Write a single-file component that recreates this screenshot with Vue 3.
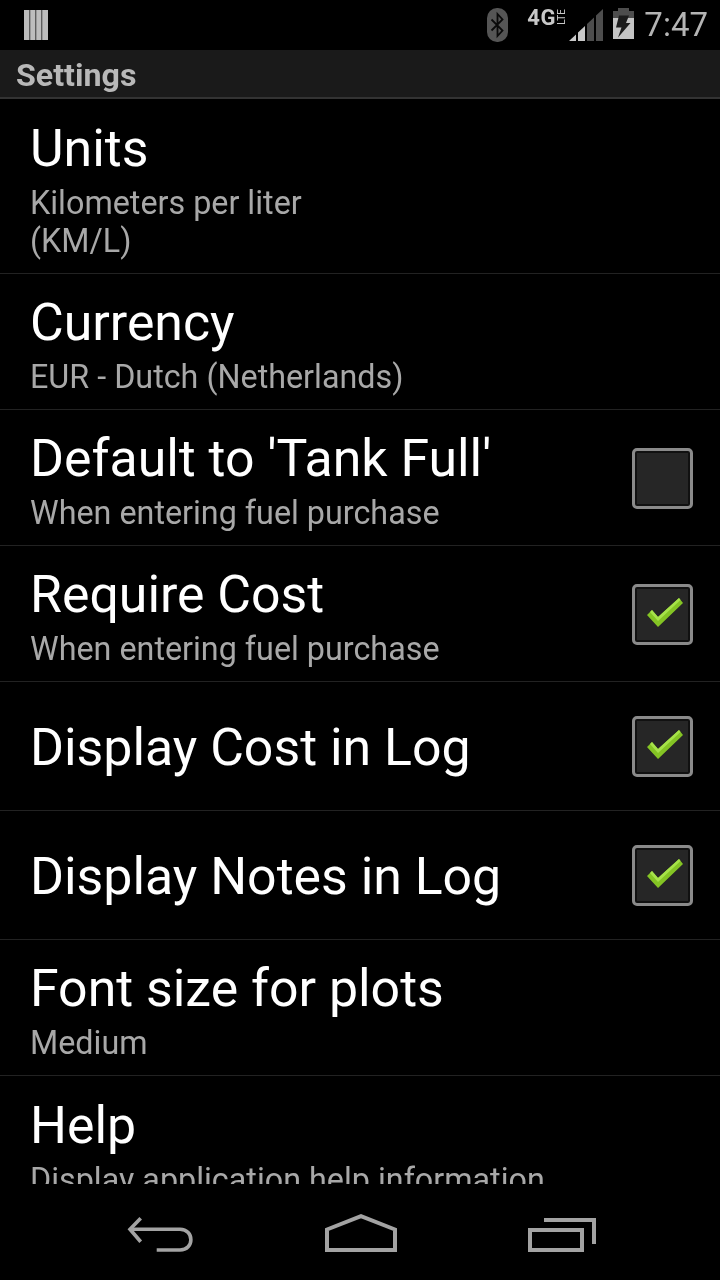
<template>
  <div class="phone">
    <div class="statusbar">
      <svg width="24" height="30" viewBox="0 0 24 30">
        <path d="M0 0h5.500v30H0zM6.200 0h5.300v30H6.200zM12.200 0h5.300v30h-5.300zM18.200 0H24v30h-5.800z" fill="#bdbdbd" />
      </svg>
      <div class="status-right">
        <svg class="bt" width="21" height="34" viewBox="0 0 21 34">
          <rect width="21" height="34" rx="10" fill="#555" />
          <path d="M4.500 11.500l11 11-5 5.500V6l5 5.500-11 11" fill="none" stroke="#0a0a0a" stroke-width="1.800" />
        </svg>
        <div class="net">
          <span class="fourg">4G</span>
          <span class="lte">LTE</span>
        </div>
        <svg class="signal" width="34" height="32" viewBox="0 0 34 32">
          <path d="M0 32L7 25.400V32z" fill="#c8c8c8" />
          <path d="M9 23.500L16 17V32H9z" fill="#c8c8c8" />
          <path d="M18 15L25 8.500V32H18z" fill="#4d4d4d" />
          <path d="M27 6.600L34 0V32H27z" fill="#4d4d4d" />
        </svg>
        <svg class="batt" width="21" height="31" viewBox="0 0 21 31">
          <path d="M5 0h11v3h5v28H0V3h5z" fill="#4d4d4d" />
          <path d="M0 10h21v21H0z" fill="#c4c4c4" />
          <path d="M6 7.500H16L13 15H17.500L5 29.500 8.500 19.500H3z" fill="#1c1c1c" />
        </svg>
        <span class="clock">7:47</span>
      </div>
    </div>
    <div class="titlebar"><span>Settings</span></div>
    <div class="list">
      <div
        v-for="item in items"
        :key="item.title"
        class="row"
        :class="{ single: !item.summary, two: item.lines === 2 }"
      >
        <div class="text">
          <div class="title">{{ item.title }}</div>
          <div v-if="item.summary" class="summary">
            <div v-for="line in item.summary" :key="line">{{ line }}</div>
          </div>
        </div>
        <div v-if="item.check !== undefined" class="box">
          <svg v-if="item.check" class="tick" width="36" height="29" viewBox="0 0 36 29">
            <path d="M0 17L5 12 11 19 32 0 36 5 11 29z" fill="#84c424" />
            <path d="M5 12L11 19 32 0 33.500 2 11 23 3 14z" fill="#a6e24a" />
          </svg>
        </div>
      </div>
    </div>
    <div class="navbar">
      <svg class="back" width="66" height="38" viewBox="0 0 66 38">
        <path d="M13.700 2.300L3 13.300 13.700 25.700" fill="none" stroke="#a3a3a3" stroke-width="3.600" />
        <path d="M3 13.300H53c14.500 0 14.500 20.700 0 20.700H29.700" fill="none" stroke="#a3a3a3" stroke-width="3.600" />
      </svg>
      <svg width="72" height="38" viewBox="0 0 72 38">
        <path d="M2 15.500L36 2.200l34 13.300V36H2z" fill="none" stroke="#a3a3a3" stroke-width="4" />
      </svg>
      <svg class="recents" width="68" height="34" viewBox="0 0 68 34">
        <path d="M2 12h52v20H2z" fill="none" stroke="#a3a3a3" stroke-width="4" />
        <path d="M16 2h50v24" fill="none" stroke="#a3a3a3" stroke-width="4" />
      </svg>
    </div>
  </div>
</template>

<script setup>
const items = [
  { title: 'Units', summary: ['Kilometers per liter', '(KM/L)'], lines: 2 },
  { title: 'Currency', summary: ['EUR - Dutch (Netherlands)'] },
  { title: "Default to 'Tank Full'", summary: ['When entering fuel purchase'], check: false },
  { title: 'Require Cost', summary: ['When entering fuel purchase'], check: true },
  { title: 'Display Cost in Log', check: true },
  { title: 'Display Notes in Log', check: true },
  { title: 'Font size for plots', summary: ['Medium'] },
  { title: 'Help', summary: ['Display application help information'] },
]
</script>

<style>
html, body {
  margin: 0;
  background: #000;
}
</style>

<style scoped>
.phone {
  width: 720px;
  height: 1280px;
  background: #000;
  display: flex;
  flex-direction: column;
  font-family: Roboto, sans-serif;
  overflow: hidden;
}

.statusbar {
  height: 50px;
  flex: none;
  display: flex;
  align-items: center;
  justify-content: space-between;
  padding: 0 12px 0 24px;
  box-sizing: border-box;
  will-change: transform;
}

.status-right {
  height: 50px;
  display: flex;
  align-items: flex-start;
}

.bt {
  margin-top: 8px;
}

.net {
  display: flex;
  align-items: flex-start;
  width: 42px;
  height: 32px;
  margin: 5px 0 0 19px;
}

.fourg {
  font-size: 22px;
  font-weight: 700;
  line-height: 26px;
  letter-spacing: 0.5px;
  color: #c8c8c8;
}

.lte {
  font-size: 10px;
  line-height: 9px;
  color: #c8c8c8;
  writing-mode: vertical-rl;
  transform: rotate(180deg);
  margin: 4px 0 0 1px;
}

.signal {
  margin-top: 9px;
}

.batt {
  margin: 8px 0 0 10px;
}

.clock {
  font-size: 33px;
  color: #b4b4b4;
  margin-left: 10px;
  line-height: 50px;
}

.titlebar {
  height: 49px;
  flex: none;
  box-sizing: border-box;
  background: #1a1a1a;
  border-bottom: 2px solid #333;
  padding-left: 16px;
  font-size: 32.200px;
  font-weight: 700;
  line-height: 50px;
  color: #b8b8b8;
}

.titlebar span {
  display: inline-block;
  will-change: transform;
}

.list {
  height: 1085px;
  flex: none;
  overflow: hidden;
  will-change: transform;
}

.row {
  height: 136px;
  box-sizing: border-box;
  border-bottom: 1px solid #222;
  padding: 18px 27px 0 30px;
  display: flex;
  align-items: center;
  justify-content: space-between;
}

.row.two {
  height: 175px;
}

.row.single {
  height: 129px;
  padding-top: 0;
}

.row:last-child {
  border-bottom: none;
}

.text {
  margin-top: -13px;
}

.row.single .text {
  margin-top: 3px;
}

.title {
  font-size: 51.800px;
  line-height: 62px;
  color: #fff;
}

.summary {
  font-size: 32.300px;
  line-height: 38px;
  color: #a8a8a8;
  margin-top: 4px;
}

.box {
  width: 61px;
  height: 61px;
  flex: none;
  box-sizing: border-box;
  border: 3px solid #8a8a8a;
  border-radius: 5px;
  background: #262626;
  box-shadow: inset 0 0 0 2px #111;
  display: flex;
  align-items: center;
  justify-content: center;
}

.row:not(.single) .box {
  margin-top: -16px;
}

.row.single .box {
  margin-top: 1px;
}

.tick {
  margin: 0 0 4px 5px;
}

.navbar {
  flex: 1;
  display: flex;
  align-items: flex-start;
  justify-content: space-between;
  padding: 30px 124px 0 127px;
}

.back {
  margin-top: 2px;
}

.recents {
  margin-top: 4px;
}
</style>
